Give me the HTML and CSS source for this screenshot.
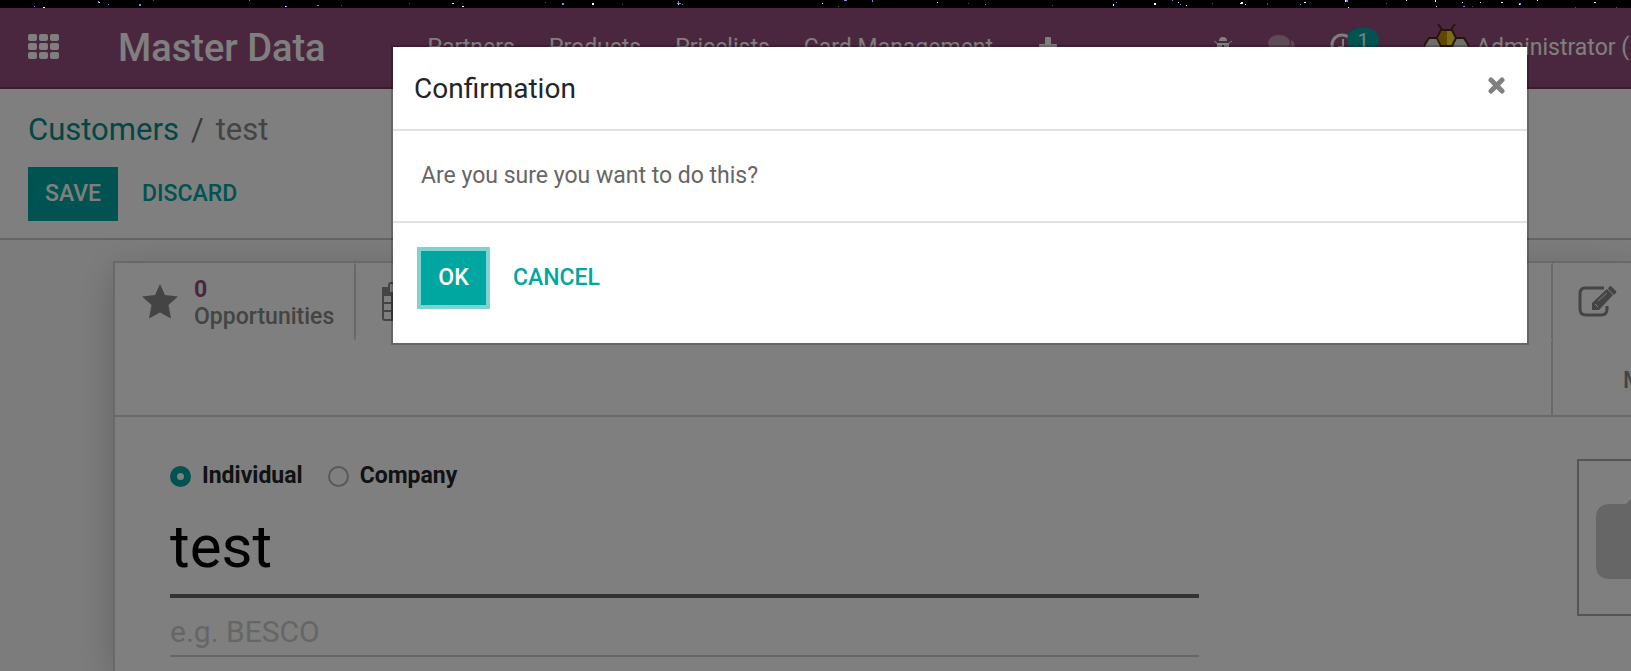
FILE: index.html
```html
<!DOCTYPE html>
<html lang="en">
<head>
<meta charset="utf-8">
<title>Master Data - test</title>
<link rel="stylesheet" href="styles.css">
</head>
<body>
<svg class="stars" width="100%" height="8" aria-hidden="true" shape-rendering="crispEdges">
  <g fill="#8a86d8"><path d="M34 6h1v1h-1zM98 1h1v2h-1zM139 4h2v2h-2zM108 4h1v1h-1zM249 0h1v1h-1zM286 6h1v1h-1zM317 5h2v1h-2zM562 3h2v2h-2zM677 3h4v1h-4zM678 1h1v2h-1zM682 4h1v1h-1zM844 0h3v1h-3zM872 0h1v2h-1zM985 4h1v1h-1zM1116 2h1v1h-1zM1172 0h1v1h-1zM1180 4h1v1h-1zM1300 4h1v1h-1zM1346 0h2v2h-2zM1463 6h2v1h-2zM1519 3h2v2h-2z"/></g>
  <g fill="#fff"><path d="M99 2h1v1h-1zM43 7h2v1h-2zM285 6h1v1h-1zM452 3h2v1h-2zM462 6h2v1h-2zM592 3h2v2h-2zM678 4h1v1h-1zM822 3h1v1h-1zM937 2h1v1h-1zM1113 4h1v2h-1zM1154 3h2v2h-2zM1178 2h1v1h-1zM1240 3h3v1h-3zM1241 2h2v1h-2zM1245 4h1v1h-1zM1186 5h1v1h-1zM1304 2h2v1h-2zM1345 0h1v2h-1zM1348 7h1v1h-1zM1406 0h1v1h-1zM1435 0h1v2h-1zM1436 6h1v1h-1zM1462 2h1v1h-1zM1480 2h1v1h-1zM1501 2h2v1h-2zM1519 4h1v1h-1zM1537 0h1v1h-1zM1594 2h2v1h-2z"/></g>
  <g fill="#555"><path d="M153 0h1v1h-1zM341 5h1v1h-1zM409 3h1v1h-1zM545 2h1v1h-1zM622 4h1v1h-1zM838 6h1v1h-1zM968 3h1v1h-1zM1052 5h1v1h-1zM1212 3h1v1h-1zM1267 3h1v2h-1zM1386 3h1v1h-1zM1472 6h1v1h-1zM1575 7h1v1h-1zM1616 7h1v1h-1z"/></g>
</svg>
<header class="navbar">
  <button class="apps" aria-label="Applications">
    <svg width="31" height="27" fill="#fff"><g id="r"><rect width="9" height="7" rx="2"/><rect x="11" width="9" height="7" rx="2"/><rect x="22" width="9" height="7" rx="2"/></g><use href="#r" y="9"/><use href="#r" y="18"/></svg>
  </button>
  <a class="brand" href="#">Master Data</a>
  <nav class="menu">
    <a href="#">Partners</a><a href="#">Products</a><a href="#">Pricelists</a><a href="#">Card Management</a>
    <a href="#" class="plus" aria-label="Add"><svg width="18" height="21" fill="#fff"><path d="M7 0h4q1 0 1 1v6h5q1 0 1 1v4q0 1-1 1h-5v5q0 1-1 1H7q-1 0-1-1v-5H1q-1 0-1-1V8q0-1 1-1h5V1q0-1 1-1z"/></svg></a>
  </nav>
  <div class="systray">
    <button aria-label="Debug"><svg width="18" height="22" fill="none" stroke="#fff" stroke-width="2"><path d="M5 4a4 4 0 0 1 8 0z" fill="#fff" stroke="none"/><path d="M0 4l4 3h10l4-3M0 12h18M2 20l3-4M16 20l-3-4" stroke-width="1"/><path d="M3 6h12v7q-1 6-6 7-5-1-6-7z" fill="#fff" stroke="none"/><path d="M9 8v11" stroke="#944e7c"/></svg></button>
    <button aria-label="Messages" class="chat"><svg width="28" height="25" fill="#fff"><ellipse cx="11" cy="8" rx="11" ry="8"/><path d="M4 13l-2 5 7-2zM23 5c5 3 5 9 1 12l2 4-7-2c-4 0-7-1-8-2 8 0 13-5 12-12z"/></svg></button>
    <button aria-label="Activities" class="activity"><svg width="24" height="30" fill="none" stroke="#fff" stroke-width="3"><circle cx="12" cy="12" r="10"/><path d="M13 6v8H8" stroke-width="2"/></svg><span class="badge">1</span></button>
    <a class="user" href="#"><svg width="45" height="47" stroke="#54280f" stroke-width="2"><path d="M14 0l5 7M31 0l-5 7" fill="none"/><path d="M5 14h9l5 8-5 8H5l-5-8zM31 14h9l5 8-5 8h-9l-5-8z" fill="#ddd"/><path d="M17 6h11l4 8-4 8H17l-4-8zM17 22h11l4 8-4 8H17l-4-8z" fill="#f2dc2a"/><path d="M18 7h5v14h-5l-4-7z" fill="#c98a00" stroke="none"/></svg><span>Administrator (1)</span></a>
  </div>
</header>
<section class="control-panel">
  <nav class="breadcrumb"><a href="#">Customers</a><span class="slash">/</span><span class="current">test</span></nav>
  <div class="actions"><button class="btn primary">Save</button><button class="btn link">Discard</button></div>
</section>
<main class="content">
  <form class="sheet">
    <div class="stats">
      <button type="button" class="stat opportunities"><svg width="36" height="36" fill="#888"><path d="M18 0l5 11 13 1.500-9.500 8.500 2.500 13.500-11-6-11 6 2.500-13.500L0 12.500 13 11z"/></svg><span><b>0</b><br>Opportunities</span></button>
      <button type="button" class="stat meetings" aria-label="Meetings"><svg width="36" height="39" fill="none" stroke="#888" stroke-width="2"><rect x="1" y="6" width="34" height="32" rx="2"/><path d="M1 6h34v7H1z" fill="#888"/><path d="M1 21h34M1 29h34M10 13v25M18 13v25M26 13v25"/><rect x="7" y="1" width="5" height="10" rx="2" fill="#fff"/><rect x="24" y="1" width="5" height="10" rx="2" fill="#fff"/></svg></button>
      <div class="side">
        <button type="button" class="stat" aria-label="Edit"><svg width="39" height="31" viewBox="0 0 39 31"><path d="M26 2H7Q2 2 2 8v15q0 6 6 6h15q6 0 6-6v-3" fill="none" stroke="#888" stroke-width="3"/><path d="M14 17L29 3l6 6-14 15h-7zM31 1q1-2 3 0l4 4q1 1-1 3l-1 1-6-6z" fill="#888"/><path d="M17 18l3 3M20 15l9-8" stroke="#fff" stroke-width="1"/></svg></button>
        <button type="button" class="stat more"><span>More</span></button>
      </div>
    </div>
    <div class="body">
      <div class="fields">
        <div class="radios">
          <label><input type="radio" name="kind" checked>Individual</label>
          <label><input type="radio" name="kind">Company</label>
        </div>
        <input class="name" type="text" value="test" aria-label="Name">
        <input class="company" type="text" placeholder="e.g. BESCO" aria-label="Company name">
      </div>
      <div class="photo"><svg width="118" height="94" fill="#ccc"><path d="M14 19h16l12-13q5-6 10-6h16q5 0 10 6l12 13h14q14 0 14 14v47q0 14-14 14H14Q0 94 0 80V33q0-14 14-14z"/></svg></div>
    </div>
  </form>
</main>
<div class="backdrop">
  <div class="modal" role="dialog" aria-modal="true" aria-labelledby="dialog-title">
    <header><h4 id="dialog-title">Confirmation</h4><button class="close" aria-label="Close"><svg width="17" height="17" stroke="#808080" stroke-width="5" stroke-linecap="round"><path d="M3 3l11 11M14 3L3 14"/></svg></button></header>
    <p>Are you sure you want to do this?</p>
    <footer><button class="btn primary focused">Ok</button><button class="btn link">Cancel</button></footer>
  </div>
</div>
</body>
</html>
```
FILE: styles.css
```css
* { box-sizing: border-box; }
body { margin: 0; height: 100vh; overflow: hidden; background: #fff; color: #666; font: 23px/26px Roboto, sans-serif; display: flex; flex-direction: column; }
button, input { font: inherit; color: inherit; border: 0; background: none; padding: 0; }
a { text-decoration: none; color: inherit; }
svg { display: block; flex: none; }
.stars { background: #000; }
.navbar { flex: none; height: 81px; padding-left: 28px; background: #944e7c; border-bottom: 2px solid #6e3a5c; color: #fff; display: flex; align-items: center; white-space: nowrap; overflow: hidden; }
.brand { margin-left: 59px; font-size: 38px; font-weight: 500; }
.menu { display: flex; align-items: center; gap: 34px; margin-left: 102px; }
.menu .plus { margin-left: 12px; }
.systray { display: flex; align-items: center; margin-left: 157px; }
.chat { margin-left: 36px; opacity: .4; }
.activity { margin-left: 34px; position: relative; }
.badge { position: absolute; left: 17px; top: -5px; width: 32px; height: 24px; border-radius: 12px; background: #00a7a1; font-size: 20px; line-height: 26px; text-align: center; }
.user { display: flex; align-items: center; gap: 7px; margin-left: 70px; }
.control-panel { flex: none; padding: 23px 28px 17px; border-bottom: 2px solid #c8c8c8; }
.breadcrumb { display: flex; font-size: 31px; line-height: 36px; color: #888; }
.breadcrumb a { color: #008f8a; }
.breadcrumb .slash { margin: 0 12px; color: #6c757d; }
.actions { display: flex; margin-top: 19px; }
.btn { height: 54px; padding: 0 17px; font-size: 23px; font-weight: 500; text-transform: uppercase; }
.primary { min-width: 65px; background: #00a7a1; color: #fff; }
.link { color: #00a7a1; margin-left: 7px; }
.content { flex: 1; padding: 21px 0 0 113px; background: #f9f9f9; }
.sheet { height: 100%; background: #fff; border: 2px solid #ced4da; border-width: 2px 0 0 2px; box-shadow: 0 9px 35px rgba(0, 0, 0, .2); }
.stats { display: flex; height: 154px; border-bottom: 2px solid #ced4da; color: #888; font-weight: 500; }
.stat { height: 77px; display: flex; align-items: center; text-align: left; line-height: 27px; }
.stat span { padding-top: 3px; }
.opportunities { width: 241px; padding-left: 27px; gap: 16px; border-right: 2px solid #ced4da; border-radius: 2px; }
.opportunities b { color: #944e7c; }
.meetings { padding-left: 26px; }
.side { margin-left: auto; width: 80px; overflow: hidden; }
.side .stat { width: 100%; padding-left: 25px; border-left: 2px solid #ced4da; border-radius: 2px; }
.side .more { padding-left: 70px; }
.body { display: flex; justify-content: space-between; padding-left: 55px; }
.fields { flex: 0 1 1029px; }
.radios { display: flex; gap: 25px; margin-top: 46px; color: #212529; font-weight: 700; }
.radios label { display: flex; align-items: center; gap: 11px; }
.radios input { appearance: none; width: 21px; height: 21px; margin: 0; border: 2px solid #adb5bd; border-radius: 50%; }
.radios input:checked { border: 7px solid #00a7a1; }
.name, .company { display: block; width: 100%; outline: 0; }
.name { height: 92px; margin-top: 17px; padding-bottom: 8px; border-bottom: 4px solid #666; color: #000; font-size: 60px; }
.company { height: 59px; border-bottom: 2px solid #ccc; padding-top: 10px; font-size: 30px; }
.company::placeholder { color: #ccc; opacity: 1; }
.photo { flex: none; width: 54px; height: 157px; margin-top: 42px; padding: 24px 0 0 17px; border: 2px solid #aaa; border-right: 0; overflow: hidden; }
.backdrop { position: fixed; inset: 0; top: 8px; padding: 37px 102px 0 391px; background: rgba(0, 0, 0, .5); }
.modal { background: #fff; background-clip: padding-box; border: 2px solid rgba(0, 0, 0, .2); }
.modal header { display: flex; justify-content: space-between; height: 84px; padding: 21px 22px 0 21px; border-bottom: 2px solid #dee2e6; }
.modal h4 { margin: 0; color: #212529; font-size: 28px; font-weight: 400; line-height: 42px; }
.close { align-self: flex-start; padding-top: 9px; }
.modal p { margin: 0; padding: 32px 28px; }
.modal footer { display: flex; padding: 28px; border-top: 2px solid #dee2e6; height: 122px; }
.modal .link { margin-left: 10px; }
.focused { box-shadow: 0 0 0 4px #80d3d0; }
```
